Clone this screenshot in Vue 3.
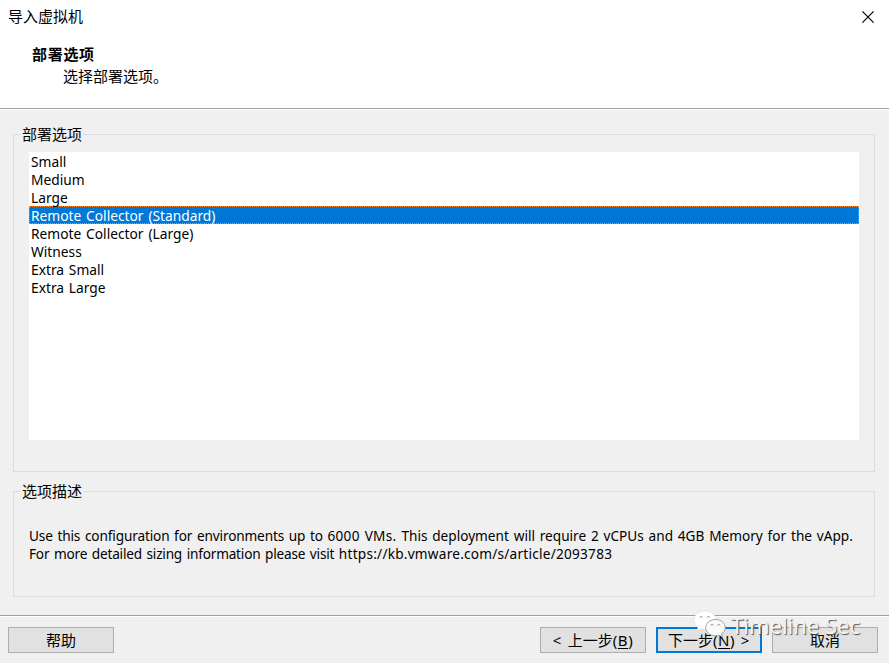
<script setup>
import { ref } from 'vue'

const options = [
  'Small',
  'Medium',
  'Large',
  'Remote Collector (Standard)',
  'Remote Collector (Large)',
  'Witness',
  'Extra Small',
  'Extra Large',
]
const selected = ref(3)
</script>

<template>
  <div class="dialog">
    <header class="header">
      <div class="titlebar">
        <span class="title">导入虚拟机</span>
        <svg class="close" width="12" height="12" viewBox="0 0 12 12">
          <path d="M0.4 0.4L11.6 11.6M11.6 0.4L0.4 11.6" stroke="#000" stroke-width="1.15" fill="none" />
        </svg>
      </div>
      <h1 class="heading">部署选项</h1>
      <p class="subheading">选择部署选项。</p>
    </header>

    <main class="body">
      <section class="group group-options">
        <div class="legend"><span>部署选项</span></div>
        <ul class="list">
          <li
            v-for="(option, i) in options"
            :key="option"
            class="item"
            :class="{ selected: i === selected }"
            @click="selected = i"
          ><span class="narrow">{{ option }}</span></li>
        </ul>
      </section>

      <section class="group group-description">
        <div class="legend"><span>选项描述</span></div>
        <div class="description">
          <p><span class="narrow"><span class="tight">Use this configuration for environments up to </span><span class="loose">6000 VMs. </span>This deployment will require 2 vCPUs and 4GB Memory for the vApp.</span></p>
          <p><span class="narrow"><span class="tighter">For more detailed sizing information please visit </span><span class="loose">https://kb.vmware.com/s/article/2093783</span></span></p>
        </div>
      </section>
    </main>

    <footer class="footer">
      <button class="btn help">帮助</button>
      <button class="btn"><span class="lat">&lt; </span>上一步<span class="lat">(<u>B</u>)</span></button>
      <button class="btn primary">下一步<span class="lat">(<u>N</u>) &gt;</span></button>
      <button class="btn">取消</button>
    </footer>

    <div class="watermark">
      <svg class="wechat" width="34" height="28" viewBox="0 0 34 28">
        <path d="M12 1C5.800 1 1 5 1 10.300C1 13.300 2.500 15.800 5 17.500L4 21L8 19C9.300 19.400 10.600 19.500 12 19.500C18.200 19.500 23 15.500 23 10.300C23 5 18.200 1 12 1Z" fill="#fff" stroke="#d8d8d8" stroke-width=".6" />
        <path d="M22.500 9.500C17 9.500 12.700 13 12.700 17.600C12.700 22.200 17 25.700 22.500 25.700C23.800 25.700 25 25.500 26.100 25.200L29.500 27L28.600 24C30.800 22.500 32.200 20.200 32.200 17.600C32.200 13 28 9.500 22.500 9.500Z" fill="#fafafa" stroke="#999" stroke-width=".9" />
        <g fill="none" stroke="#888" stroke-width="1">
          <path d="M6.800 7.500a1.500 1.500 0 0 1 2.800 0M14 7.500a1.500 1.500 0 0 1 2.800 0" />
          <path d="M17.800 15.500a1.300 1.300 0 0 1 2.500 0M24.500 15.500a1.300 1.300 0 0 1 2.500 0" />
        </g>
      </svg>
      <span class="brand">Timeline Sec</span>
    </div>
  </div>
</template>

<style>
body {
  margin: 0;
  overflow: hidden;
}
</style>

<style scoped>
.dialog {
  position: relative;
  display: flex;
  flex-direction: column;
  box-sizing: border-box;
  width: 889px;
  height: 663px;
  overflow: hidden;
  background: #f0f0f0;
  color: #000;
  font-family: "Noto Sans", "Noto Sans CJK SC", sans-serif;
  font-size: 15px;
  line-height: 18px;
}
.header {
  box-sizing: border-box;
  height: 109px;
  background: #fff;
  border-bottom: 1px solid #a0a0a0;
  box-shadow: 0 1px 0 #fff;
}
.titlebar {
  display: flex;
  justify-content: space-between;
  align-items: center;
  height: 34px;
  padding: 0 15px 0 8px;
}
.title {
  margin-top: -2px;
  font-family: "Noto Sans CJK SC", sans-serif;
  font-size: 15px;
}
.heading {
  margin: 11px 0 0 32px;
  font: 700 15px/18px "Noto Sans CJK SC", sans-serif;
  letter-spacing: 0.7px;
}
.subheading {
  margin: 4px 0 0 63px;
  font: 15px/18px "Noto Sans CJK SC", sans-serif;
}
.body {
  display: flex;
  flex-direction: column;
  gap: 19px;
  height: 506px;
  box-sizing: border-box;
  padding: 25px 14px 0 13px;
}
.group {
  box-sizing: border-box;
  border: 1px solid #dcdcdc;
}
.group-options {
  height: 338px;
}
.group-description {
  height: 106px;
}
.legend {
  display: flex;
  height: 27px;
  margin-top: -10px;
  padding-left: 6px;
  font: 15px/18px "Noto Sans CJK SC", sans-serif;
}
.legend span {
  height: 18px;
  padding: 0 1px 0 2px;
  background: #f0f0f0;
}
.list {
  height: 288px;
  margin: 0 15px;
  padding: 0;
  background: #fff;
  list-style: none;
}
.item {
  box-sizing: border-box;
  height: 18px;
  padding-left: 2px;
  line-height: 18px;
}
.item.selected {
  padding-left: 1px;
  border: 1px dotted #ff8728;
  background: #0078d7;
  color: #fff;
  line-height: 16px;
}
.narrow {
  display: inline-block;
  transform: scaleX(0.908);
  transform-origin: 0 50%;
  word-spacing: 1.4px;
  white-space: nowrap;
}
.item .narrow {
  transform: scaleX(0.917);
}
.tight {
  letter-spacing: -0.15px;
}
.tighter {
  letter-spacing: -0.22px;
}
.loose {
  letter-spacing: 0.26px;
}
.description {
  width: 842px;
  box-sizing: border-box;
  overflow: hidden;
  padding: 17px 0 8px 15px;
  white-space: nowrap;
}
.description p {
  margin: 0;
}
.footer {
  display: flex;
  gap: 10px;
  box-sizing: border-box;
  height: 48px;
  padding: 10px 11px 0 8px;
  border-top: 1px solid #a0a0a0;
  box-shadow: inset 0 1px 0 #fff;
}
.btn {
  box-sizing: border-box;
  width: 106px;
  height: 26px;
  margin-top: 1px;
  padding: 0;
  border: 1px solid #adadad;
  border-radius: 0;
  background: #e1e1e1;
  color: #000;
  font: 15px/22px "Noto Sans CJK SC", sans-serif;
  white-space: pre;
}
.btn.help {
  margin-right: auto;
}
.btn.primary {
  border: 2px solid #0078d7;
}
.lat {
  font-family: "Noto Sans", sans-serif;
  word-spacing: 1.5px;
  letter-spacing: 0.5px;
}
.btn u {
  text-underline-offset: 2px;
}
.watermark {
  position: absolute;
  left: 693px;
  top: 610px;
  display: flex;
  pointer-events: none;
}
.brand {
  margin-left: 4px;
  color: #f4f4f4;
  font: 22px/31px "Noto Sans", sans-serif;
  text-shadow: 1px 1px 1px #555;
  white-space: nowrap;
}
</style>
